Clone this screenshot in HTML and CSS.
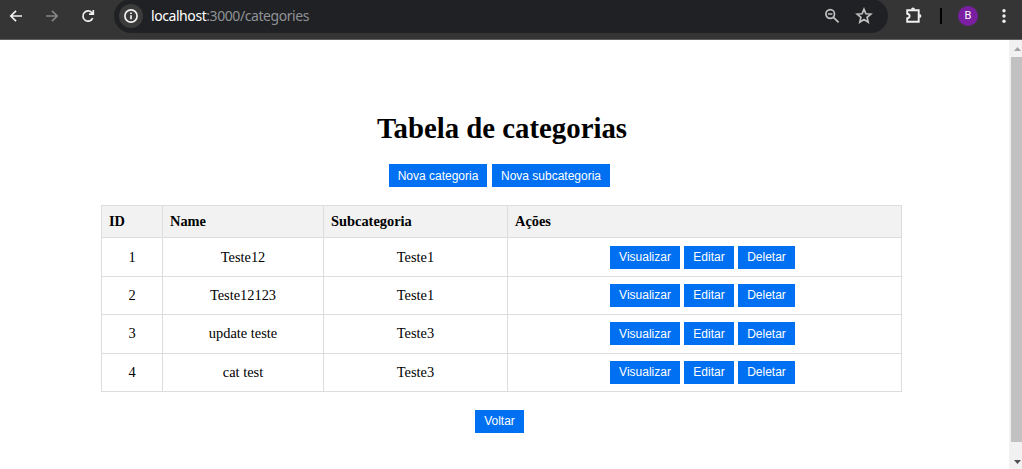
FILE: index.html
```html
<!DOCTYPE html>
<html lang="pt-BR">
<head>
<meta charset="utf-8">
<title>Tabela de categorias</title>
<link rel="stylesheet" href="styles.css">
</head>
<body>
<header class="toolbar">
  <svg class="icon back" viewBox="0 0 16 16"><path d="M14 8H3M8 2.8L2.8 8L8 13.2"/></svg>
  <svg class="icon forward" viewBox="0 0 16 16"><path d="M2 8H13M8 2.8L13.2 8L8 13.2"/></svg>
  <svg class="icon reload" viewBox="0 0 16 16"><path d="M12.7 10.2A5.1 5.1 0 1 1 11.9 4.7L13.2 6M13.3 2V6.2H9"/></svg>
  <div class="omnibox">
    <span class="site-info"><svg class="icon" viewBox="0 0 16 16"><circle cx="8" cy="8" r="6.1"/><path d="M8 7.2V11.3M8 4.6V6.1"/></svg></span>
    <span class="url"><b>localhost</b>:3000/categories</span>
    <svg class="icon zoom" viewBox="0 0 16 16"><circle cx="6.2" cy="6" r="4.3"/><path d="M9.5 9.3L14.6 14.4M4 6H8.4"/></svg>
    <svg class="icon star" viewBox="0 0 18 18"><path d="M9 2.2L10.9 6.8L15.8 7.2L12.1 10.4L13.2 15.2L9 12.6L4.8 15.2L5.9 10.4L2.2 7.2L7.1 6.8Z"/></svg>
  </div>
  <svg class="icon puzzle" viewBox="0 0 18 18"><path d="M2.2 3.2H13.7V14.7H2.2V11.3Q4.6 11.1 4.6 9T2.2 6.7Z"/><path class="solid" d="M6 2.8a2 2.2 0 0 1 4 0ZM14.2 6.9a2.2 2 0 0 1 0 4Z"/></svg>
  <span class="divider"></span>
  <span class="avatar">B</span>
  <svg class="menu" viewBox="0 0 4 16"><circle cx="2" cy="2.7" r="1.7"/><circle cx="2" cy="8" r="1.7"/><circle cx="2" cy="13.3" r="1.7"/></svg>
</header>
<div class="viewport">
  <main class="page">
    <h1>Tabela de categorias</h1>
    <div class="create"><button class="w-cat">Nova categoria</button><button class="w-sub">Nova subcategoria</button></div>
    <table>
      <colgroup><col class="c-id"><col class="c-name"><col class="c-sub"><col class="c-actions"></colgroup>
      <thead><tr><th>ID</th><th>Name</th><th>Subcategoria</th><th>Ações</th></tr></thead>
      <tbody>
        <tr class="tall"><td>1</td><td>Teste12</td><td>Teste1</td><td><div class="actions"><button class="w-view">Visualizar</button><button class="w-edit">Editar</button><button class="w-del">Deletar</button></div></td></tr>
        <tr><td>2</td><td>Teste12123</td><td>Teste1</td><td><div class="actions"><button class="w-view">Visualizar</button><button class="w-edit">Editar</button><button class="w-del">Deletar</button></div></td></tr>
        <tr class="tall raised"><td>3</td><td>update teste</td><td>Teste3</td><td><div class="actions"><button class="w-view">Visualizar</button><button class="w-edit">Editar</button><button class="w-del">Deletar</button></div></td></tr>
        <tr><td>4</td><td>cat test</td><td>Teste3</td><td><div class="actions"><button class="w-view">Visualizar</button><button class="w-edit">Editar</button><button class="w-del">Deletar</button></div></td></tr>
      </tbody>
    </table>
    <button class="w-back">Voltar</button>
  </main>
  <aside class="scrollbar">
    <svg viewBox="0 0 13 17"><path class="up" d="M5 11H12L8.5 7Z"/></svg>
    <div class="thumb"></div>
    <svg class="bottom" viewBox="0 0 13 17"><path class="down" d="M5 8H12L8.5 12Z"/></svg>
  </aside>
</div>
</body>
</html>
```
FILE: styles.css
```css
* { box-sizing: border-box; }
body { margin: 0; height: 469px; overflow: hidden; background: #fff; color: #000; font: 14.4px "Liberation Serif", "Times New Roman", serif; }

.toolbar { display: flex; align-items: center; height: 40px; padding: 0 0 7px; background: #353535; border-bottom: 1px solid #5f5f5f; }
.toolbar > * { flex: none; }
.icon { flex: none; width: 16px; height: 16px; fill: none; stroke: #f1f1f1; stroke-width: 1.7; }
.back { margin-left: 8px; }
.forward { margin-left: 20px; stroke: #858585; }
.reload { margin-left: 20px; }
.omnibox { display: flex; align-items: center; width: 774px; height: 34px; margin-left: 18px; padding-left: 5px; border-radius: 17px; background: #202124; }
.site-info { display: flex; align-items: center; justify-content: center; width: 24px; height: 24px; border-radius: 50%; background: #3b3b3b; }
.url { margin-left: 8px; flex: 1; font: 14px/20px "Noto Sans", sans-serif; letter-spacing: -0.43px; color: #8f9296; }
.url b { font-weight: 400; color: #fff; }
.zoom, .star { stroke: #c0c0c0; stroke-width: 1.7; }
.star { width: 18px; height: 18px; margin: 0 15px 0 16px; }
.zoom { margin-right: -1px; }
.puzzle { width: 18px; height: 18px; margin-left: 17px; stroke-width: 1.9; }
.puzzle .solid { fill: #f1f1f1; stroke: none; }
.divider { width: 2px; height: 16px; margin-left: 17px; background: #000; }
.avatar { width: 20px; height: 20px; margin-left: 16px; border-radius: 50%; background: #7b1fa2; color: #fff; font: 11px/20px Roboto, sans-serif; text-align: center; }
.menu { width: 4px; height: 16px; margin-left: 24px; fill: #f1f1f1; }

.viewport { display: flex; height: 429px; }
.page { display: flex; flex-direction: column; align-items: center; width: 1009px; padding: 72px 10px 0 4px; }
h1 { margin: 0 0 0 1px; font-size: 28.8px; line-height: 33px; }
.create { display: flex; gap: 5px; margin: 19px 4px 18px 0; }
button { height: 23px; padding: 0 0 1px; border: 0; background: #0070f3; color: #fff; font: 12px "Liberation Sans", Arial, sans-serif; text-align: center; white-space: nowrap; }
.create button { padding: 1px 0 0; }
.w-cat { width: 98px; }
.w-sub { width: 118px; }
.w-view { width: 70px; }
.w-edit { width: 50px; }
.w-del { width: 57px; }
.w-back { width: 49px; margin: 18px 4px 0 0; }

table { width: 801px; margin-left: 6px; margin-right: 6px; border-collapse: collapse; table-layout: fixed; }
.c-id { width: 61px; }
.c-name { width: 161px; }
.c-sub { width: 184px; }
.c-actions { width: 394px; }
th, td { padding: 0; border: 1px solid #ddd; }
th { height: 32px; padding-left: 7px; background: #f2f2f2; text-align: left; }
td { height: 38px; text-align: center; }
.tall td { height: 39px; }
.raised td { padding-bottom: 2px; }
.raised button { padding: 1px 0 0; }
.actions { display: flex; justify-content: center; gap: 4px; margin-right: 4px; }

.scrollbar { display: flex; flex-direction: column; width: 13px; background: #f1f1f1; }
.scrollbar svg { flex: none; width: 13px; height: 17px; }
.scrollbar .bottom { margin-top: auto; }
.thumb { height: 385px; margin-left: 2px; background: #c1c1c1; }
.up { fill: #a3a3a3; }
.down { fill: #505050; }
```
